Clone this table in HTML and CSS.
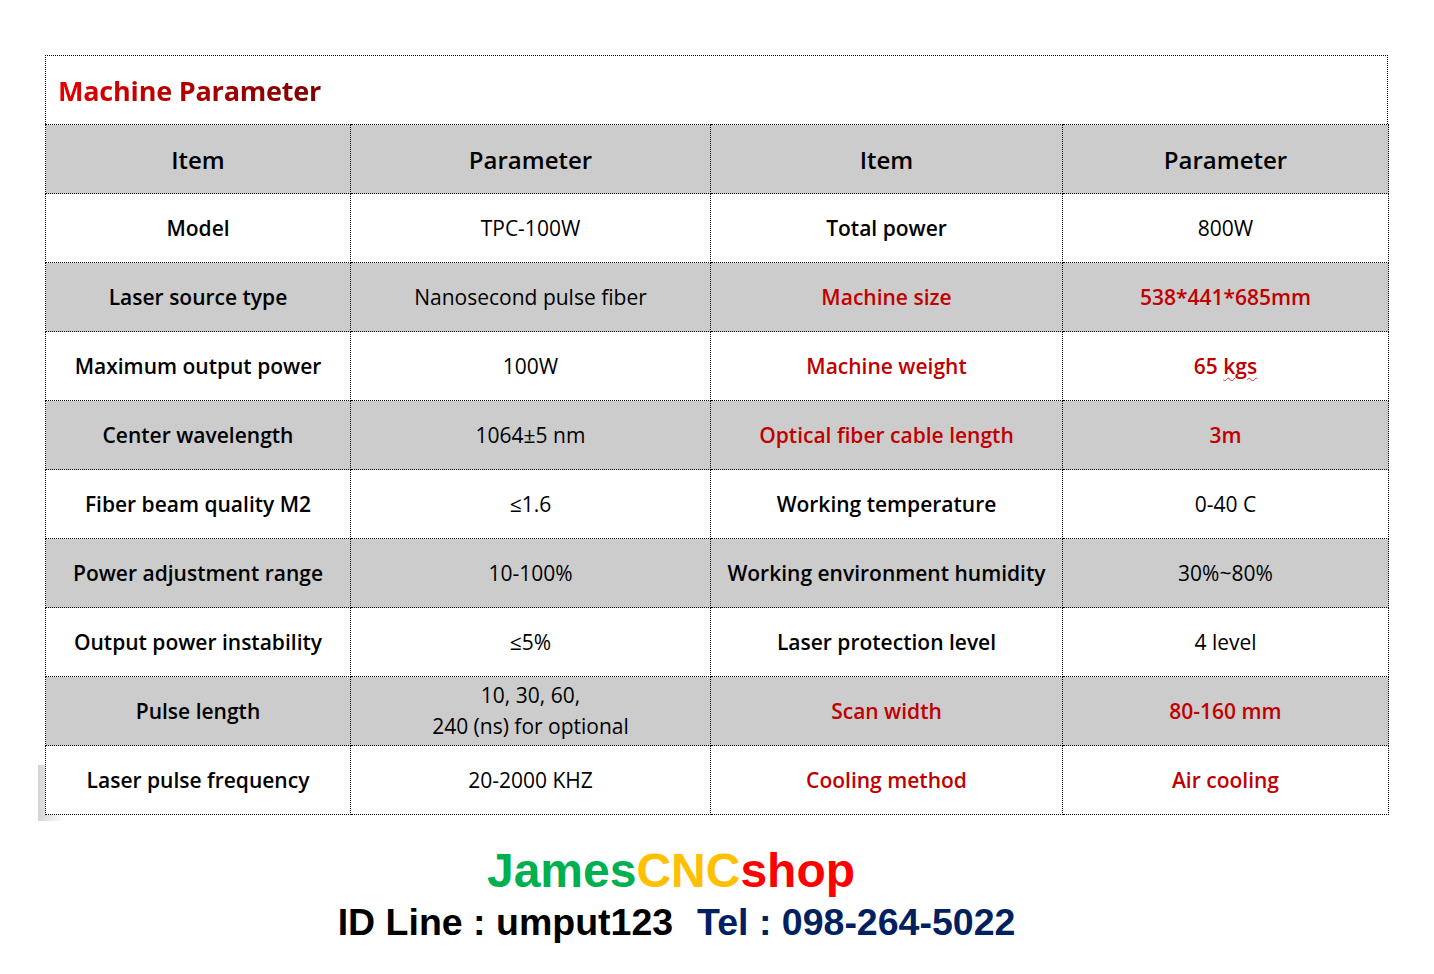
FILE: index.html
```html
<!DOCTYPE html>
<html>
<head>
<meta charset="utf-8">
<link rel="stylesheet" href="styles.css">
</head>
<body>
<div class="page">
  <div class="sheet">
    <div class="title-row"><span class="title">Machine Parameter</span></div>
    <table class="params">
      <colgroup>
        <col class="c1"><col class="c2"><col class="c3"><col class="c4">
      </colgroup>
      <tr class="head gray">
        <th>Item</th><th>Parameter</th><th>Item</th><th>Parameter</th>
      </tr>
      <tr>
        <td class="b">Model</td><td>TPC-100W</td><td class="b">Total power</td><td>800W</td>
      </tr>
      <tr class="gray">
        <td class="b">Laser source type</td><td>Nanosecond pulse fiber</td><td class="b red">Machine size</td><td class="b red">538*441*685mm</td>
      </tr>
      <tr>
        <td class="b">Maximum output power</td><td>100W</td><td class="b red">Machine weight</td><td class="b red">65 <span class="squiggle">kgs</span></td>
      </tr>
      <tr class="gray">
        <td class="b">Center wavelength</td><td>1064±5 nm</td><td class="b red">Optical fiber cable length</td><td class="b red">3m</td>
      </tr>
      <tr>
        <td class="b">Fiber beam quality M2</td><td>≤1.6</td><td class="b">Working temperature</td><td>0-40 C</td>
      </tr>
      <tr class="gray">
        <td class="b">Power adjustment range</td><td>10-100%</td><td class="b">Working environment humidity</td><td>30%~80%</td>
      </tr>
      <tr>
        <td class="b">Output power instability</td><td>≤5%</td><td class="b">Laser protection level</td><td>4 level</td>
      </tr>
      <tr class="gray">
        <td class="b">Pulse length</td><td class="two">10, 30, 60,<br>240 (ns) for optional</td><td class="b red">Scan width</td><td class="b red">80-160 mm</td>
      </tr>
      <tr>
        <td class="b">Laser pulse frequency</td><td>20-2000 KHZ</td><td class="b red">Cooling method</td><td class="b red">Air cooling</td>
      </tr>
    </table>
  </div>
  <div class="footer">
    <div class="brand"><span class="g">James</span><span class="y">CNC</span><span class="r">shop</span></div>
    <div class="contact"><span class="k">ID Line : umput123</span><span class="n">Tel : 098-264-5022</span></div>
  </div>
</div>
</body>
</html>
```
FILE: styles.css
```css
html, body {
  margin: 0;
  padding: 0;
  background: #ffffff;
}
.page {
  width: 1434px;
  height: 974px;
  padding-top: 55px;
  box-sizing: border-box;
  font-family: "Open Sans", "Noto Sans", sans-serif;
  color: #000;
}
.sheet {
  position: relative;
  margin-left: 45px;
  width: 1343px;
}
.sheet::before {
  content: "";
  position: absolute;
  left: -7px;
  bottom: -6px;
  width: 30px;
  height: 56px;
  background: linear-gradient(to right, #d4d4d4, #ffffff 90%);
}
.title-row {
  position: relative;
  height: 68px;
  border: 1px dotted #000;
  border-bottom: none;
  background: #fff;
  display: flex;
  align-items: center;
  padding-left: 12px;
}
.title {
  font-size: 27px;
  font-weight: 700;
  background: linear-gradient(to right, #e60000, #7a0000);
  -webkit-background-clip: text;
  background-clip: text;
  color: transparent;
  letter-spacing: -0.2px;
}
.params {
  position: relative;
  border-collapse: collapse;
  width: 1343px;
  table-layout: fixed;
  background: #fff;
}
.c1 { width: 305px; }
.c2 { width: 360px; }
.c3 { width: 352px; }
.c4 { width: 326px; }
.params th, .params td {
  border: 1px dotted #000;
  height: 68px;
  padding: 0;
  text-align: center;
  vertical-align: middle;
  font-size: 21px;
  font-weight: 400;
  line-height: 31px;
}
.params th {
  font-size: 24px;
  font-weight: 600;
}
.params td.b { font-weight: 600; }
.params td.red { color: #c00000; }
.gray th, .gray td { background: #cccccc; }
.squiggle {
  text-decoration: underline wavy #e03030;
  text-decoration-thickness: 1px;
  text-underline-offset: 3px;
}
.footer {
  display: flex;
  flex-direction: column;
  align-items: center;
  font-family: "Liberation Sans", Arial, sans-serif;
  font-weight: 700;
  margin-top: 28px;
}
.brand {
  font-size: 48px;
  line-height: 56px;
  margin-left: -92px;
}
.g { color: #00b050; }
.y { color: #ffc000; }
.r { color: #ff0000; }
.contact {
  font-size: 37.5px;
  line-height: 46px;
  display: flex;
  gap: 24px;
  margin-left: -81px;
}
.contact .k { color: #000; }
.contact .n { color: #002060; }
```
